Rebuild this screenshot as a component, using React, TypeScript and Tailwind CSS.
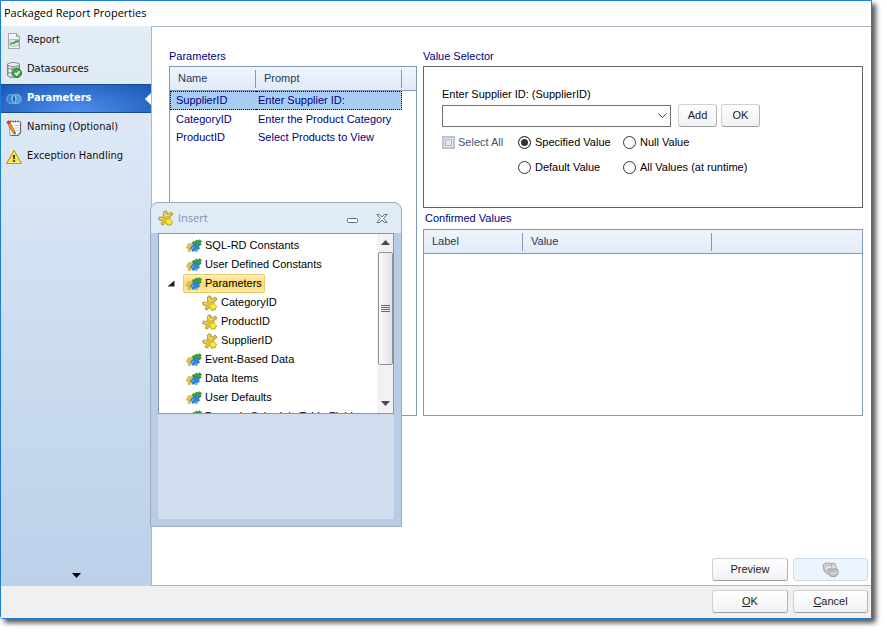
import { useState } from 'react';
import type { ReactNode } from 'react';

const NAV_ITEMS = ['Report', 'Datasources', 'Parameters', 'Naming (Optional)', 'Exception Handling'];

const PARAMS = [
  { name: 'SupplierID', prompt: 'Enter Supplier ID:' },
  { name: 'CategoryID', prompt: 'Enter the Product Category' },
  { name: 'ProductID', prompt: 'Select Products to View' },
];

const TREE = [
  { label: 'SQL-RD Constants', child: false },
  { label: 'User Defined Constants', child: false },
  { label: 'Parameters', child: false },
  { label: 'CategoryID', child: true },
  { label: 'ProductID', child: true },
  { label: 'SupplierID', child: true },
  { label: 'Event-Based Data', child: false },
  { label: 'Data Items', child: false },
  { label: 'User Defaults', child: false },
  { label: 'Dynamic Schedule Table Fields', child: false },
];

const VALUE_MODES = ['Specified Value', 'Null Value', 'Default Value', 'All Values (at runtime)'];

function NavIcon({ name }: { name: string }) {
  switch (name) {
    case 'Report':
      return (
        <svg width="16" height="16" viewBox="0 0 16 16">
          <path d="M2.500 .5h8l3 3v12h-11z" fill="#f4f4f4" stroke="#a4a4a4" />
          <path d="M10.500 .5v3h3z" fill="#ddd" stroke="#a4a4a4" />
          <path d="M4 6.500h8.500v6.500H4z" fill="#dcebdf" stroke="#b3c4b7" />
          <path d="M4.500 11.500l2-2 1.500 1 2-2.500 1 1 1.500-2" fill="none" stroke="#3a9152" strokeWidth="1.300" />
        </svg>
      );
    case 'Datasources':
      return (
        <svg width="16" height="16" viewBox="0 0 16 16">
          <path d="M1.500 2v11c0 1.500 2.500 2.500 6 2.500s6-1 6-2.500V2z" fill="#bcbfc1" stroke="#85898c" />
          <path d="M4 4v10" stroke="#f4f4f4" strokeWidth="2" />
          <path d="M1.500 6c1 1.500 11 1.500 12 0M1.500 10c1 1.500 11 1.500 12 0" fill="none" stroke="#7b8083" />
          <ellipse cx="7.500" cy="2.500" rx="6" ry="2" fill="#ededed" stroke="#85898c" />
          <circle cx="11" cy="11" r="4.500" fill="#46a846" stroke="#237a2a" />
          <path d="M8.800 11l1.700 1.800 3-3.500" fill="none" stroke="#fff" strokeWidth="1.600" />
        </svg>
      );
    case 'Parameters':
      return (
        <svg width="16" height="16" viewBox="0 0 16 16">
          <circle cx="5.500" cy="8" r="4.500" fill="#3a86cc" stroke="#5fa6dc" strokeWidth="1.300" />
          <circle cx="10.500" cy="8" r="4.500" fill="#59a8e0" fillOpacity=".8" stroke="#6cb2e2" strokeWidth="1.300" />
          <path d="M8 4.300a4.500 4.500 0 0 1 0 7.400a4.500 4.500 0 0 1 0-7.400z" fill="#1e61b4" stroke="#9fd2f2" />
        </svg>
      );
    case 'Naming (Optional)':
      return (
        <svg width="16" height="16" viewBox="0 0 16 16">
          <path d="M3 1.500h11.500v11l-2.500 3H4z" fill="#fff" stroke="#9a9a9a" />
          <path d="M14.500 2v10.500l-2.500 3H5" fill="none" stroke="#6b6b6b" strokeWidth="1.300" />
          <path d="M4.500 .5v2M7 .5v2M9.500 .5v2M12 .5v2" stroke="#555" />
          <path d="M8 5.500h5M9 8h4M10 10.500h2.500" stroke="#b9c4d2" />
          <path d="M.8 1.800L3 .8l6 10.500.3 2.700-2.500-1.300z" fill="#ee9a2a" stroke="#9c4d12" strokeWidth=".7" />
          <path d="M.8 1.800L3 .8l1.500 2.500-2.100 1z" fill="#d8382c" />
          <path d="M8.300 12.300l1 1.700-1.700-.8z" fill="#222" />
        </svg>
      );
    default:
      return (
        <svg width="16" height="16" viewBox="0 0 16 16">
          <path d="M8 1.500L15.300 14.500H.7z" fill="#fbe331" stroke="#b99a10" strokeWidth="1.200" strokeLinejoin="round" />
          <path d="M8 3.500L13.500 13.500H2.500z" fill="none" stroke="#fff6a0" strokeWidth=".7" />
          <path d="M7 6h2l-.4 4.300H7.400z" fill="#222" />
          <circle cx="8" cy="12" r="1" fill="#222" />
        </svg>
      );
  }
}

// one puzzle piece, used for leaf nodes and the window caption
function PuzzleIcon() {
  return (
    <svg width="16" height="16" viewBox="0 0 16 16" className="shrink-0">
      <path
        d="M5.500 3.500C5.200 1.500 6.500 .5 8 1s1.500 2 1.200 3l2-.3c.3-1 1.300-1.700 2.500-1.200s1.500 2 .7 2.700-1.600.6-2.200 1.300-.7 1.700-.2 2.300l2.500 2.400-1.300 3.500-3.700.5c-.8-.8-.5-2-1.500-2.500s-1.300.3-1.500 1-1 1.600-2.200 1.200-1.300-1.700-.6-2.500.8-1.200.5-1.700-1-.3-1.800-.2S.4 9.500.6 8.200 2 6.600 3 7.200s1.500.3 2-.4.600-2 .500-3.300z"
        fill="#dcbf3a"
        stroke="#8f731a"
        strokeWidth=".6"
      />
      <path d="M8 10.500l4-1.500 2.200 2-1.200 3-3 .4z" fill="#f8ee1d" />
      <path d="M6.500 2.500l1 3 3.500-.5M2 8.500l3 .5" fill="none" stroke="#f3e49a" strokeWidth="1" />
    </svg>
  );
}

function PuzzleGroupIcon() {
  return (
    <svg width="16" height="16" viewBox="0 0 16 16" className="shrink-0">
      <path d="M1 8l1.500-2.500 2 .5L6 4.500l2 1.500-1 3-2 1.500L4 14l-2-.7.500-2.500L.5 10z" fill="#e0c548" stroke="#b59b2c" strokeWidth=".5" />
      <path d="M7 3.500l2 .2L10 2l2 .7 1.500-1L15.500 3l-1 2 .8 1.500-2 1.200L11 7 9 7.500 6.500 5.500z" fill="#35a336" stroke="#1d7526" strokeWidth=".5" />
      <path d="M7 7l2-1.500 2.500 1 1.700.5-.4 2 1 1.500-2.500 1.200-.3 2-2.500-.8-2.300.4-.5-2-1.700-.8 1.500-1.800z" fill="#2f86d6" stroke="#1f68ae" strokeWidth=".5" />
      <path d="M5.500 10.800l2-1.500M9 13l2-1" stroke="#a8d6fa" />
    </svg>
  );
}

function Button({ children, className = '' }: { children: ReactNode; className?: string }) {
  return (
    <button
      type="button"
      className={`h-[23px] rounded-[3px] border border-[#d0d0d0] border-b-[#a0a0a0] border-r-[#b4b4b4] bg-linear-to-b from-white to-[#f0f1f3] text-[#222] ${className}`}
    >
      {children}
    </button>
  );
}

function HeaderCell({ text, last = false }: { text: string; last?: boolean }) {
  return (
    <th className="h-6 border-b border-[#8099bb] p-0 text-left font-normal">
      <div className={`flex h-[18px] items-center pl-2 ${last ? '' : 'border-r border-[#8099bb]'}`}>{text}</div>
    </th>
  );
}

function Sidebar({ active, onSelect }: { active: string; onSelect: (item: string) => void }) {
  return (
    <nav className="flex w-[151px] shrink-0 flex-col border-r border-[#a9b8cb] bg-linear-to-b from-[#e3edf7] to-[#bbd0ea] font-['DejaVu_Sans_Condensed','DejaVu_Sans',sans-serif] text-[11px]">
      {NAV_ITEMS.map((item) => (
        <button
          key={item}
          type="button"
          onClick={() => onSelect(item)}
          className={`flex h-[29px] items-center pl-[5px] text-left ${
            item === active
              ? 'justify-between border-y border-[#174a94] bg-radial-[at_50%_100%] from-[#4f90ee] to-[#1b58b5] font-bold text-white'
              : 'text-[#111]'
          }`}
        >
          <span className="flex items-center gap-[5px]">
            <NavIcon name={item} />
            {item}
          </span>
          {item === active && (
            <svg width="6" height="12" viewBox="0 0 6 12">
              <path d="M6 0v12L0 6z" fill="#fff" />
            </svg>
          )}
        </button>
      ))}
      <button type="button" aria-label="More" className="mt-auto flex h-[22px] items-center justify-center">
        <svg width="9" height="5" viewBox="0 0 9 5">
          <path d="M0 0h9L4.500 5z" fill="#000" />
        </svg>
      </button>
    </nav>
  );
}

function ParameterList() {
  const [selected, setSelected] = useState('SupplierID');

  return (
    <section className="flex w-[248px] shrink-0 flex-col">
      <h2 className="h-5 leading-5 text-[#000080]">Parameters</h2>
      <div className="flex-1 border border-[#8099bb]">
        <table className="w-full table-fixed border-separate border-spacing-0 text-[#000080]">
          <colgroup>
            <col className="w-[86px]" />
            <col className="w-[146px]" />
            <col />
          </colgroup>
          <thead className="bg-linear-to-b from-[#eff5fc] to-[#e0eaf7] text-[#1e395b]">
            <tr>
              <HeaderCell text="Name" />
              <HeaderCell text="Prompt" />
              <HeaderCell text="" last />
            </tr>
          </thead>
          <tbody>
            {PARAMS.map((p) => {
              const on = p.name === selected;
              return (
                <tr key={p.name} onClick={() => setSelected(p.name)}>
                  <td className={`h-[18px] border-y border-l py-0 pr-0 pl-[5px] ${on ? 'border-dotted border-black bg-[#a8cdf1]' : 'border-transparent'}`}>
                    {p.name}
                  </td>
                  <td className={`h-[18px] border-y border-r py-0 pr-0 pl-[2px] whitespace-nowrap ${on ? 'border-dotted border-black bg-[#a8cdf1]' : 'border-transparent'}`}>
                    {p.prompt}
                  </td>
                  <td />
                </tr>
              );
            })}
          </tbody>
        </table>
      </div>
    </section>
  );
}

function ValueSelector() {
  const [mode, setMode] = useState('Specified Value');

  return (
    <section>
      <h2 className="h-5 leading-5 text-[#000080]">Value Selector</h2>
      <div className="h-[142px] border border-[#646464] pt-[19px] pl-[18px] text-black">
        <label htmlFor="supplier" className="block h-[18px]">
          Enter Supplier ID: (SupplierID)
        </label>
        <div className="flex items-center">
          <div className="grid w-[229px]">
            <select id="supplier" className="col-start-1 row-start-1 h-[22px] appearance-none border border-[#707070] bg-white pl-1">
              <option></option>
            </select>
            <svg width="9" height="6" viewBox="0 0 9 6" className="pointer-events-none col-start-1 row-start-1 mr-1 self-center justify-self-end">
              <path d="M.5 .5l4 4 4-4" fill="none" stroke="#444" />
            </svg>
          </div>
          <Button className="ml-[7px] w-[39px]">Add</Button>
          <Button className="ml-1 w-[39px]">OK</Button>
        </div>
        <div className="mt-1.5 flex">
          <label className="flex h-[18px] w-[76px] items-center gap-[3px] text-[#3b5577]">
            <input
              type="checkbox"
              disabled
              className="size-[13px] appearance-none border-2 border-[#b4c6de] bg-[#e8e8e8] outline outline-offset-[-4px] outline-[#b8b8b8]"
            />
            Select All
          </label>
          <div className="grid grid-cols-[105px_auto] gap-y-[7px]">
            {VALUE_MODES.map((m) => (
              <label key={m} className="flex h-[18px] items-center gap-1 whitespace-nowrap">
                <input
                  type="radio"
                  name="mode"
                  checked={m === mode}
                  onChange={() => setMode(m)}
                  className="size-[13px] appearance-none rounded-full border border-[#333] bg-white checked:bg-[#333] checked:shadow-[inset_0_0_0_2px_#fff]"
                />
                {m}
              </label>
            ))}
          </div>
        </div>
      </div>
    </section>
  );
}

function ConfirmedValues() {
  return (
    <section className="flex flex-1 flex-col">
      <h2 className="h-[21px] pl-0.5 leading-[21px] text-[#000080]">Confirmed Values</h2>
      <div className="flex-1 border border-[#8099bb]">
        <table className="w-full table-fixed border-separate border-spacing-0">
          <colgroup>
            <col className="w-[99px]" />
            <col className="w-[189px]" />
            <col />
          </colgroup>
          <thead className="bg-linear-to-b from-[#eff5fc] to-[#e0eaf7] text-[#1e395b]">
            <tr>
              <HeaderCell text="Label" />
              <HeaderCell text="Value" />
              <HeaderCell text="" last />
            </tr>
          </thead>
        </table>
      </div>
    </section>
  );
}

function InsertWindow() {
  const [selected, setSelected] = useState('Parameters');

  return (
    <div className="absolute top-[201px] left-[149px] w-[252px] rounded-t-lg border border-[#9dabbf] bg-[#bacce5]">
      <div className="flex h-[30px] items-center rounded-t-lg bg-[#dfebf7] pr-[13px] pl-[7px]">
        <PuzzleIcon />
        <span className="ml-1 flex-1 font-['Open_Sans',sans-serif] text-[11px] text-[#7b93bb]">Insert</span>
        <button type="button" aria-label="Minimize" className="mr-[17px]">
          <svg width="12" height="12" viewBox="0 0 12 12">
            <rect x=".5" y="6.500" width="10" height="4" rx="1" fill="#fff" stroke="#5c6779" />
          </svg>
        </button>
        <button type="button" aria-label="Close">
          <svg width="12" height="11" viewBox="0 0 12 11">
            <path
              d="M1 1.500h2.500L6 4l2.500-2.500H11L7.500 5.500 11 9.500H8.500L6 7 3.500 9.500H1L4.500 5.500z"
              fill="#fff"
              stroke="#5c6779"
            />
          </svg>
        </button>
      </div>
      <div className="mx-[7px] mb-[7px] bg-[#d0ddee] pb-[105px]">
        <div className="flex h-[181px] overflow-hidden border border-[#8099bb] bg-white">
          <ul className="flex-1 pt-0.5 text-black">
            {TREE.map((node) => (
              <li key={node.label} className={`flex h-[19px] items-center ${node.child ? 'pl-10' : 'pl-2'}`}>
                {!node.child && (
                  <span className="flex w-4 justify-start">
                    {node.label === 'Parameters' && (
                      <svg width="8" height="7" viewBox="0 0 8 7">
                        <path d="M7.500 .5v6h-7z" fill="#222" />
                      </svg>
                    )}
                  </span>
                )}
                <button
                  type="button"
                  onClick={() => setSelected(node.label)}
                  className={`flex h-[19px] items-center gap-[3px] rounded-[2px] border px-0.5 whitespace-nowrap ${
                    node.label === selected ? 'border-[#ecc96c] bg-linear-to-b from-[#fdeebb] via-[#fcd968] to-[#fde9a2]' : 'border-transparent'
                  }`}
                >
                  {node.child ? <PuzzleIcon /> : <PuzzleGroupIcon />}
                  {node.label}
                </button>
              </li>
            ))}
          </ul>
          <div className="flex w-4 flex-col items-center bg-[#f2f2f2]">
            <svg width="9" height="18" viewBox="0 0 9 18">
              <path d="M0 11h9L4.500 6z" fill="#4a4a4a" />
            </svg>
            <div className="flex h-[113px] w-[15px] flex-col items-center justify-center gap-px rounded-[2px] border border-[#8b929c] bg-linear-to-r from-[#fafbfc] to-[#dfe2e8]">
              <span className="h-px w-[9px] bg-[#6a6a6a]" />
              <span className="h-px w-[9px] bg-[#6a6a6a]" />
              <span className="h-px w-[9px] bg-[#6a6a6a]" />
              <span className="h-px w-[9px] bg-[#6a6a6a]" />
            </div>
            <svg width="9" height="18" viewBox="0 0 9 18" className="mt-auto">
              <path d="M0 6h9l-4.500 5z" fill="#4a4a4a" />
            </svg>
          </div>
        </div>
      </div>
    </div>
  );
}

export default function App() {
  const [page, setPage] = useState('Parameters');

  return (
    <div className="flex min-h-screen bg-white pr-[15px] pb-[15px] font-['Liberation_Sans',Arial,sans-serif] text-[11px]">
      <div className="relative flex flex-1 flex-col rounded-b-[3px] border border-[#1a7fd4] bg-white shadow-[4px_4px_5px_rgba(0,0,0,0.65)]">
        <header className="flex h-[25px] items-center pl-[3px] font-['Open_Sans',sans-serif] text-[11px] text-black">
          <h1>Packaged Report Properties</h1>
        </header>

        <div className="flex flex-1">
          <Sidebar active={page} onSelect={setPage} />
          <main className="flex flex-1 flex-col border-t border-b border-[#a9b8cb] pt-[19px] pr-[3px] pb-1 pl-[17px]">
            <div className="flex min-h-[370px] gap-1.5 pr-[5px]">
              <ParameterList />
              <div className="flex flex-1 flex-col">
                <ValueSelector />
                <ConfirmedValues />
              </div>
            </div>
            <div className="mt-auto flex justify-end gap-[5px]">
              <Button className="w-[76px]">Preview</Button>
              <button
                type="button"
                disabled
                aria-label="Refresh"
                className="flex h-[23px] w-[75px] items-center justify-center rounded-[3px] border border-[#c9daef] bg-[#ecf4fd]"
              >
                <svg width="17" height="16" viewBox="0 0 17 16">
                  <path d="M1 2.500l3-1.500 9 .5 1.500 4V11L5 12 2 9z" fill="#cfcfcf" stroke="#a8a8a8" />
                  <path d="M3 8.500C2.500 5 5.500 3 8 4l1.500-1.500V7H6.500l1-1C6 5.500 5 7 5.500 9z" fill="#f4f4f4" stroke="#a0a0a0" strokeWidth=".7" />
                  <path d="M7 8.500c1-1.500 7.500-2 9-.5v4c-1 3-7 3.500-9 1z" fill="#bdbdbd" stroke="#a0a0a0" />
                  <path d="M7.500 10.500c2 1.500 6 1.200 8-.5M11 3l2 3" fill="none" stroke="#f0f0f0" />
                </svg>
              </button>
            </div>
          </main>
        </div>

        <footer className="flex h-8 items-center justify-end gap-[5px] bg-[#f0f0f0] pr-[3px] pb-px">
          <Button className="w-[76px]">
            <u>O</u>K
          </Button>
          <Button className="w-[75px]">
            <u>C</u>ancel
          </Button>
        </footer>

        <InsertWindow />
      </div>
    </div>
  );
}
